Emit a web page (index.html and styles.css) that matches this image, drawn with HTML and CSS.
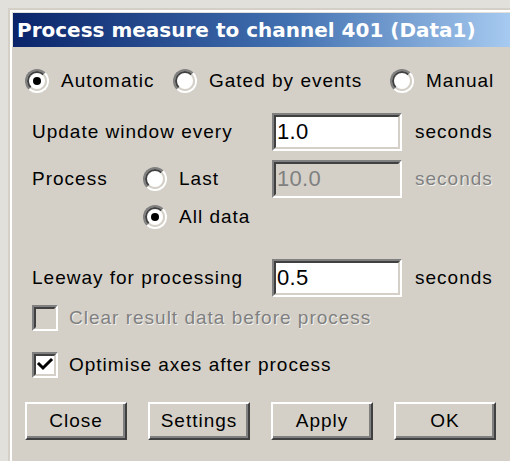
FILE: index.html
```html
<!DOCTYPE html>
<html lang="en">
<head>
<meta charset="utf-8">
<title>Process measure to channel 401 (Data1)</title>
<link rel="stylesheet" href="styles.css">
</head>
<body>
<div class="window">
  <div class="titlebar">Process measure to channel 401 (Data1)</div>
  <div class="content">
    <div class="row mode-row">
      <label class="opt opt-auto"><span class="radio"><span class="radio-in checked"></span></span><span>Automatic</span></label>
      <label class="opt opt-gated"><span class="radio"><span class="radio-in"></span></span><span>Gated by events</span></label>
      <label class="opt"><span class="radio"><span class="radio-in"></span></span><span>Manual</span></label>
    </div>

    <div class="row field-row update-row">
      <span class="label">Update window every</span>
      <span class="edit"><span class="edit-in">1.0</span></span>
      <span class="unit">seconds</span>
    </div>

    <div class="row field-row process-row">
      <span class="label label-short">Process</span>
      <label class="opt opt-last"><span class="radio"><span class="radio-in"></span></span><span>Last</span></label>
      <span class="edit disabled"><span class="edit-in">10.0</span></span>
      <span class="unit muted">seconds</span>
    </div>

    <div class="row alldata-row">
      <label class="opt opt-indent"><span class="radio"><span class="radio-in checked"></span></span><span>All data</span></label>
    </div>

    <div class="row field-row leeway-row">
      <span class="label">Leeway for processing</span>
      <span class="edit"><span class="edit-in">0.5</span></span>
      <span class="unit">seconds</span>
    </div>

    <div class="row check-row clear-row">
      <span class="check disabled"><span class="check-in"></span></span>
      <span class="muted">Clear result data before process</span>
    </div>

    <div class="row check-row optimise-row">
      <span class="check"><span class="check-in">
        <svg width="18" height="18" viewBox="0 0 18 18"><path d="M3 8 L7 12 L15 4" fill="none" stroke="#000" stroke-width="3" stroke-linecap="square"/></svg>
      </span></span>
      <span>Optimise axes after process</span>
    </div>

    <div class="row button-row">
      <button class="btn">Close</button>
      <button class="btn">Settings</button>
      <button class="btn">Apply</button>
      <button class="btn">OK</button>
    </div>
  </div>
</div>
</body>
</html>
```

FILE: styles.css
```css
html, body {
  margin: 0;
  padding: 0;
}

body {
  width: 510px;
  height: 461px;
  overflow: hidden;
  background: #e2e0da;
  font-family: "Liberation Sans", Arial, sans-serif;
  font-size: 19px;
  letter-spacing: 1px;
  color: #000;
}

/* Window frame: grey outer edge with a white highlight just inside */
.window {
  position: relative;
  margin: 8px 0 0 8px;
  border-top: 2px solid #d4d0c8;
  border-left: 2px solid #d4d0c8;
  height: 460px;
  box-sizing: border-box;
}

.window::before {
  content: "";
  position: absolute;
  left: 0;
  top: 0;
  right: 0;
  bottom: 0;
  border-top: 2px solid #fff;
  border-left: 2px solid #fff;
  pointer-events: none;
}

.titlebar {
  margin: 3px 0 0 3px;
  height: 34px;
  padding-left: 4px;
  background: linear-gradient(to right, #0a246a 0%, #4170b0 55%, #a6caf0 100%);
  color: #fff;
  font-family: "DejaVu Sans", Verdana, sans-serif;
  font-weight: bold;
  font-size: 20px;
  letter-spacing: 0;
  line-height: 34px;
  white-space: nowrap;
  overflow: hidden;
}

.content {
  background: #d4d0c8;
  display: flex;
  flex-direction: column;
  padding-left: 15px;
  height: 420px;
}

.row {
  display: flex;
  align-items: center;
}

.mode-row {
  margin-top: 22px;
  height: 24px;
}

.opt {
  display: flex;
  align-items: center;
  gap: 12px;
}

.opt-auto { width: 148px; }
.opt-gated { width: 217px; }

/* Sunken round option button */
.radio {
  width: 24px;
  height: 24px;
  box-sizing: border-box;
  border-radius: 50%;
  border: 2px solid;
  border-color: #808080 #fff #fff #808080;
  flex: none;
}

.radio-in {
  display: flex;
  align-items: center;
  justify-content: center;
  width: 100%;
  height: 100%;
  box-sizing: border-box;
  border-radius: 50%;
  border: 2px solid;
  border-color: #404040 #d4d0c8 #d4d0c8 #404040;
  background: #fff;
}

.radio-in.checked::after {
  content: "";
  width: 8px;
  height: 8px;
  border-radius: 50%;
  background: #000;
}

.field-row {
  height: 38px;
  padding-left: 7px;
}

.update-row { margin-top: 20px; }
.process-row { margin-top: 9px; }
.leeway-row { margin-top: 30px; }

.label { width: 240px; }
.label-short { width: 111px; }
.opt-last { width: 129px; }

.alldata-row {
  margin-top: 7px;
  height: 24px;
}

.opt-indent { margin-left: 118px; }

/* Sunken edit box */
.edit {
  width: 130px;
  height: 38px;
  box-sizing: border-box;
  border: 2px solid;
  border-color: #808080 #fff #fff #808080;
  flex: none;
}

.edit-in {
  display: flex;
  align-items: center;
  height: 100%;
  box-sizing: border-box;
  border: 2px solid;
  border-color: #404040 #d4d0c8 #d4d0c8 #404040;
  background: #fff;
  padding-left: 1px;
  font-size: 22px;
  letter-spacing: 0.3px;
}

.edit.disabled .edit-in {
  background: #d4d0c8;
  color: #808080;
}

.unit { margin-left: 13px; }

.muted {
  color: #808080;
  text-shadow: 1px 1px 0 #f2f1ed;
}

.check-row {
  padding-left: 7px;
  height: 26px;
  gap: 11px;
}

.clear-row { margin-top: 8px; }
.optimise-row { margin-top: 21px; }

/* Sunken check box */
.check {
  width: 26px;
  height: 26px;
  box-sizing: border-box;
  border: 2px solid;
  border-color: #808080 #fff #fff #808080;
  flex: none;
}

.check-in {
  display: flex;
  align-items: center;
  justify-content: center;
  height: 100%;
  box-sizing: border-box;
  border: 2px solid;
  border-color: #404040 #d4d0c8 #d4d0c8 #404040;
  background: #fff;
}

.check.disabled .check-in { background: #d4d0c8; }

.button-row {
  margin-top: 24px;
  gap: 21px;
}

/* Raised push button */
.btn {
  width: 102px;
  height: 38px;
  box-sizing: border-box;
  padding: 0;
  border: 2px solid;
  border-color: #fff #404040 #404040 #fff;
  box-shadow: inset -2px -2px 0 #808080;
  background: #d4d0c8;
  font-family: "Liberation Sans", Arial, sans-serif;
  font-size: 19px;
  letter-spacing: 1px;
  color: #000;
}
```
